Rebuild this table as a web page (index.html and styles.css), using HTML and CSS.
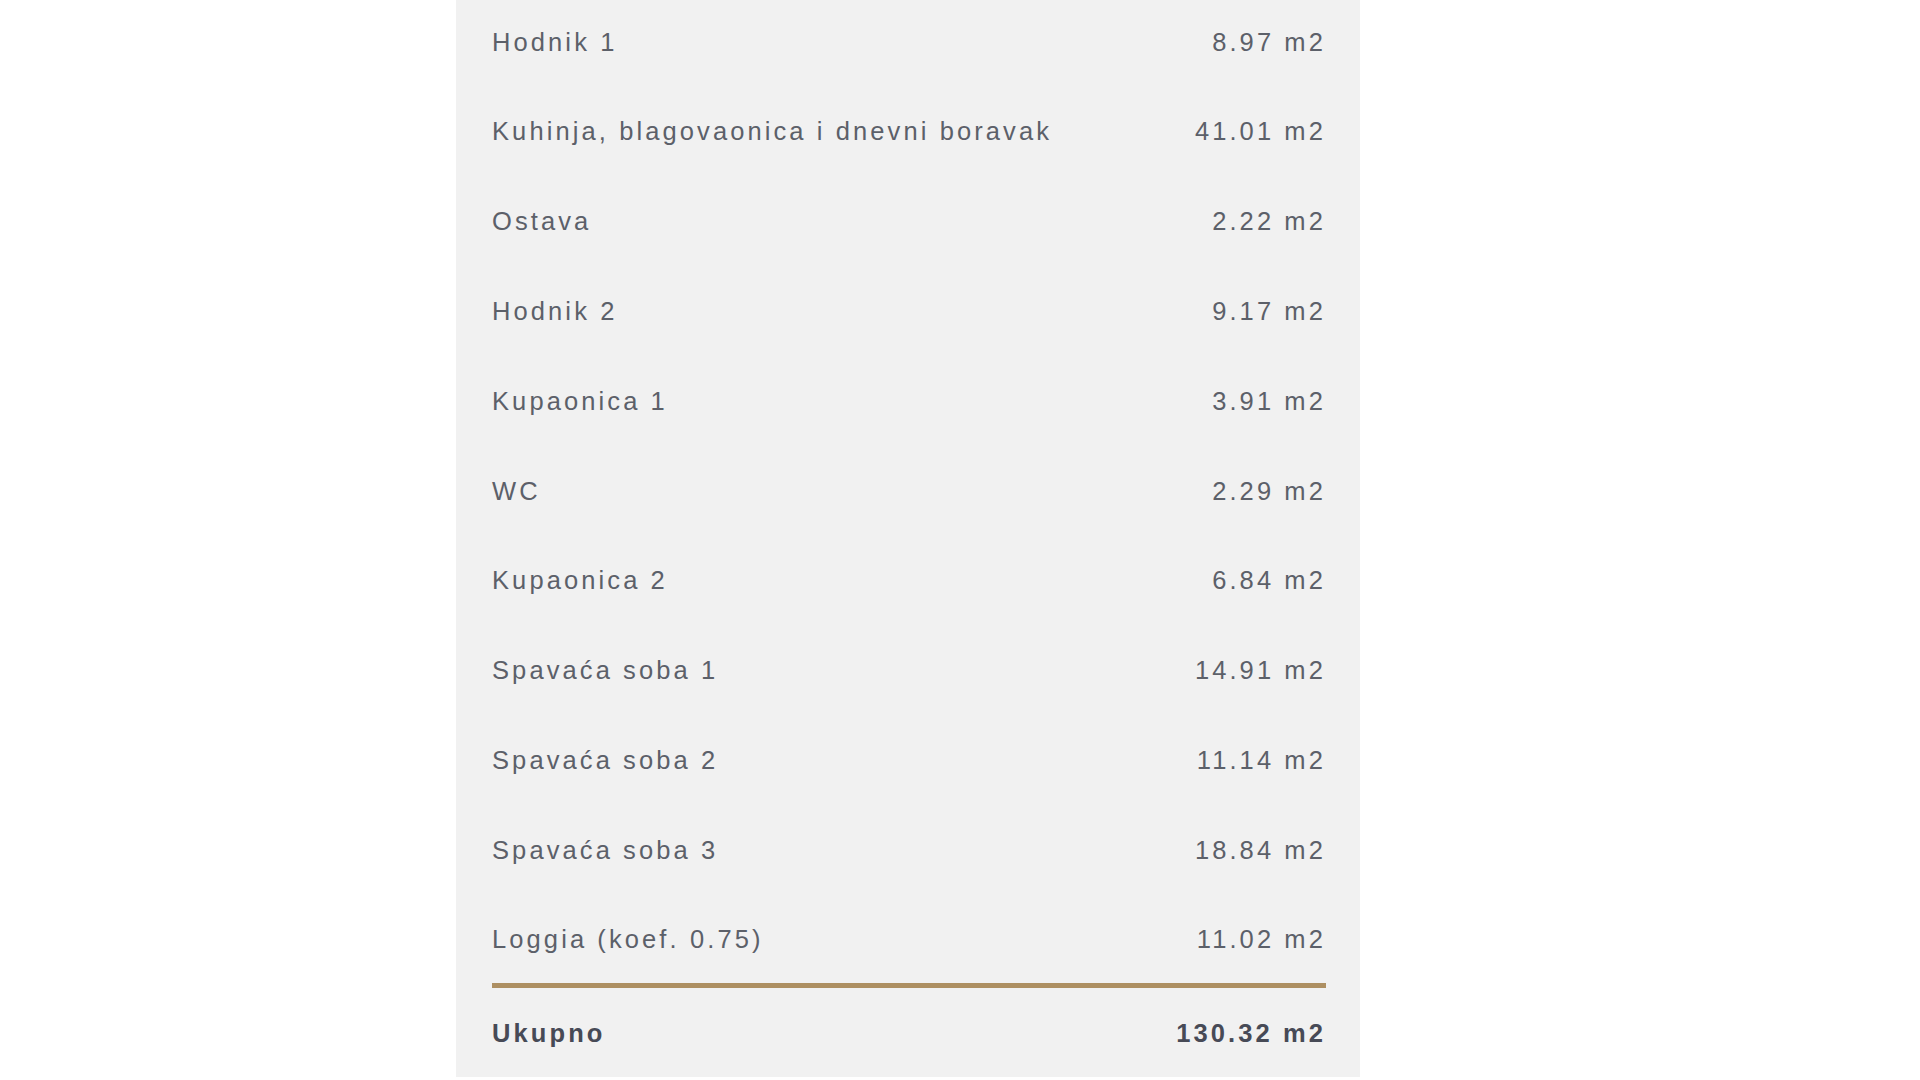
FILE: index.html
```html
<!DOCTYPE html>
<html lang="hr">
<head>
    <meta charset="UTF-8">
    <meta name="viewport" content="width=device-width, initial-scale=1.0">
    <title>Stan - površine</title>
    <link rel="stylesheet" href="styles.css">
</head>
<body>
    <div class="page">
        <div class="areas">
            <div class="area-list">
                <div class="area-row"><span>Hodnik 1</span><span>8.97 m2</span></div>
                <div class="area-row"><span>Kuhinja, blagovaonica i dnevni boravak</span><span>41.01 m2</span></div>
                <div class="area-row"><span>Ostava</span><span>2.22 m2</span></div>
                <div class="area-row"><span>Hodnik 2</span><span>9.17 m2</span></div>
                <div class="area-row"><span>Kupaonica 1</span><span>3.91 m2</span></div>
                <div class="area-row"><span>WC</span><span>2.29 m2</span></div>
                <div class="area-row"><span>Kupaonica 2</span><span>6.84 m2</span></div>
                <div class="area-row"><span>Spavaća soba 1</span><span>14.91 m2</span></div>
                <div class="area-row"><span>Spavaća soba 2</span><span>11.14 m2</span></div>
                <div class="area-row"><span>Spavaća soba 3</span><span>18.84 m2</span></div>
                <div class="area-row"><span>Loggia (koef. 0.75)</span><span>11.02 m2</span></div>
            </div>
            <div class="area-total"><span>Ukupno</span><span>130.32 m2</span></div>
        </div>
    </div>
</body>
</html>
```

FILE: styles.css
```css
body {
    margin: 0;
    background-color: #fff;
    font-family: "Liberation Sans", Arial, sans-serif;
}

.page {
    padding-left: 456px;
}

.areas {
    width: 904px;
    box-sizing: border-box;
    padding: 0 34px 29.4px 36px;
    background-color: #f1f1f1;
}

.area-row,
.area-total {
    display: flex;
    justify-content: space-between;
    font-size: 25.5px;
    line-height: 28px;
    letter-spacing: 3.1px;
}

.area-row {
    padding: 27.6px 0 34.2px 0;
    color: #5c6069;
}

.area-row:last-child {
    padding-bottom: 30px;
}

.area-total {
    border-top: 5px solid #ad8f62;
    padding-top: 30.8px;
    font-weight: bold;
    letter-spacing: 3.1px;
    color: #474a56;
}
```
